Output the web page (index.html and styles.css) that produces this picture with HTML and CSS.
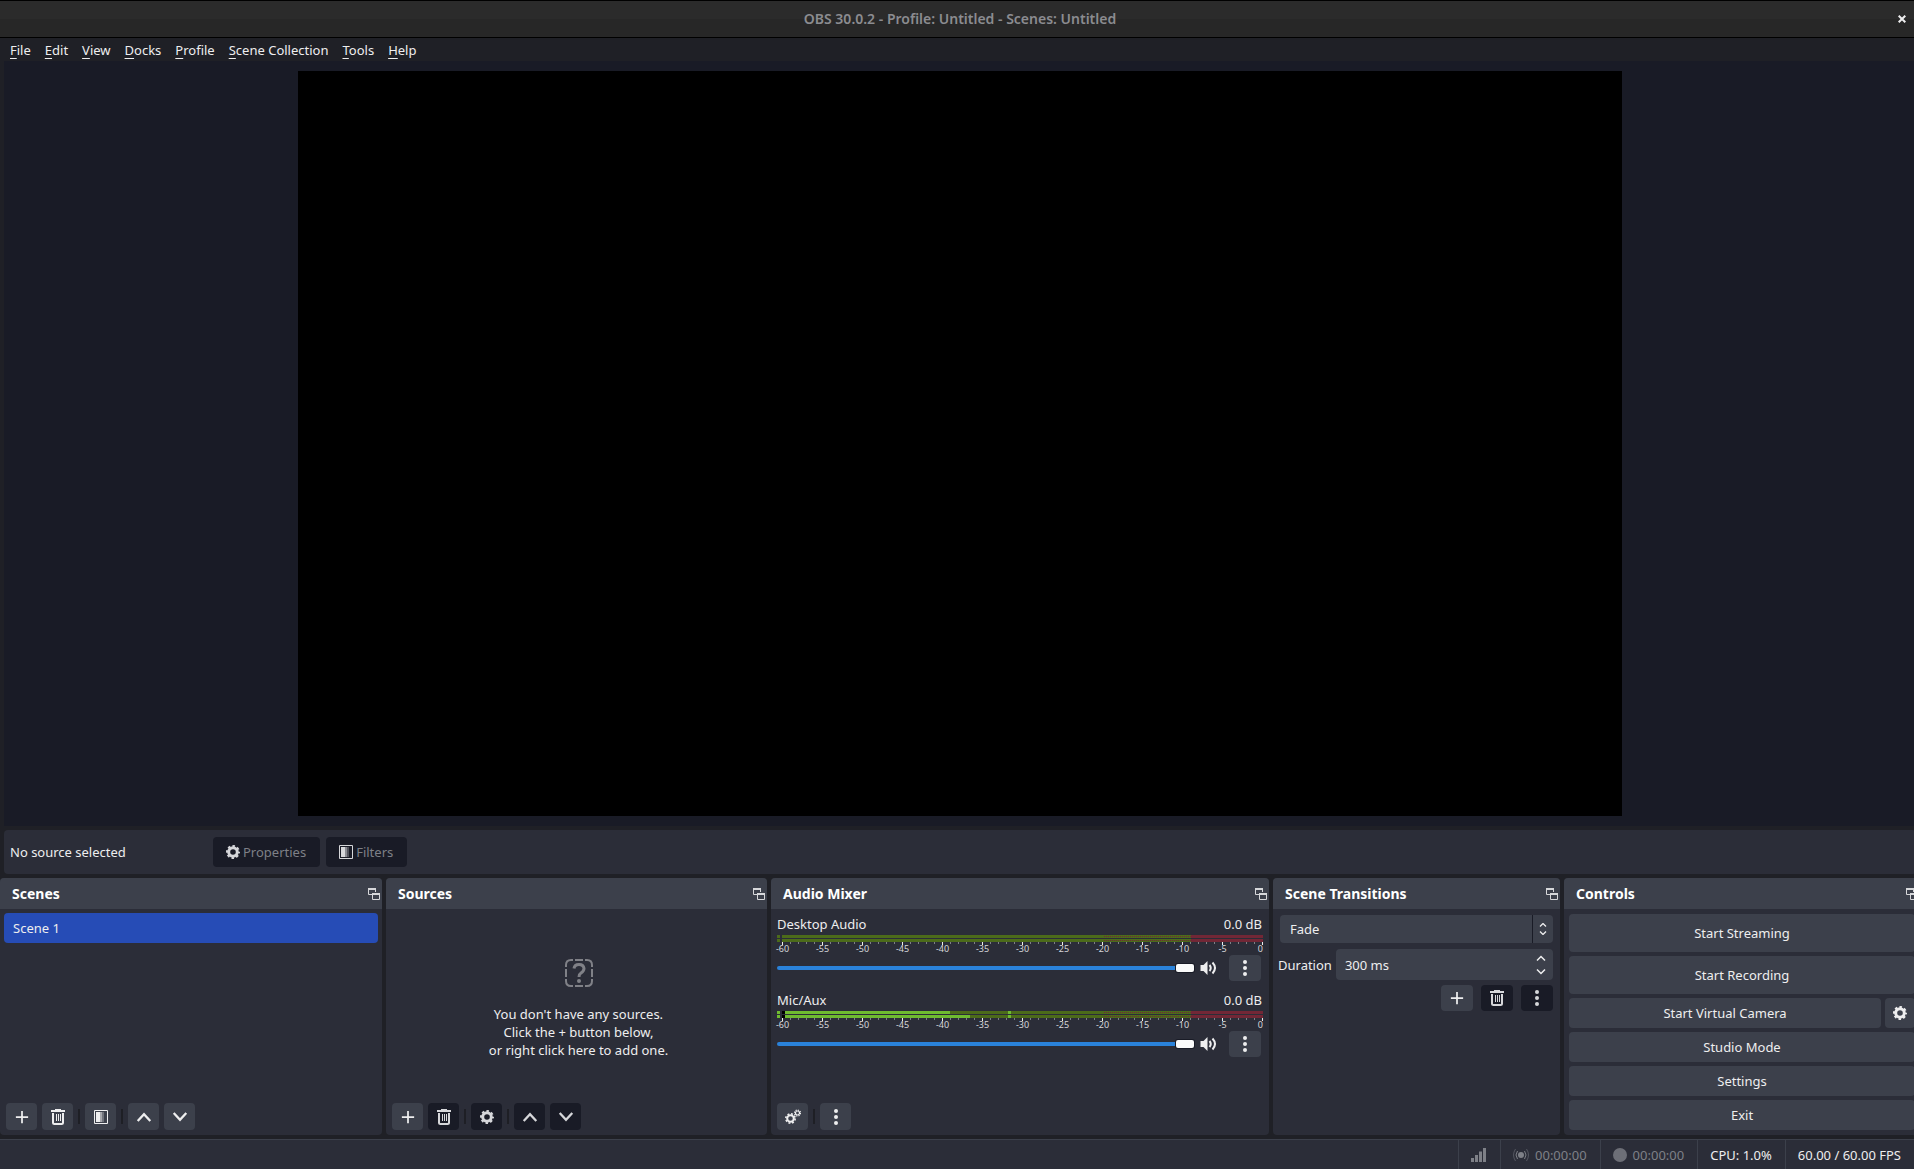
FILE: index.html
```
<!DOCTYPE html>
<html lang="en">
<head>
    <meta charset="UTF-8">
    <meta name="viewport" content="width=device-width, initial-scale=1.0">
    <title>OBS 30.0.2 - Profile: Untitled - Scenes: Untitled</title>
    <link rel="stylesheet" href="styles.css">
</head>
<body>
    <!-- shared icons -->
    <svg class="sprite" width="0" height="0" aria-hidden="true">
        <symbol id="plus" viewBox="0 0 16 16"><path d="M8 1v14M1 8h14" fill="none" stroke="currentColor" stroke-width="2"/></symbol>
        <symbol id="trash" viewBox="0 0 16 16"><path d="M5 0h6v1h4v2H1V1h4z" fill="currentColor"/><path d="M3 4v9.500q0 1.500 1.500 1.500h7q1.500 0 1.500-1.500V4" fill="none" stroke="currentColor" stroke-width="2"/><path d="M6.500 5v7M8.500 5v7M10.500 5v7" stroke="currentColor"/></symbol>
        <symbol id="filter" viewBox="0 0 14 14"><path d="M.5.500h13v13H.5z" fill="none" stroke="currentColor"/><path d="M2 2h4v10H2z" fill="currentColor"/><path d="M6 2h2v10H6z" fill="currentColor" opacity=".6"/><path d="M8 2h2v10H8z" fill="currentColor" opacity=".3"/></symbol>
        <symbol id="up" viewBox="0 0 14 14"><path d="M1.500 10.500 7 4.500l5.500 6" fill="none" stroke="currentColor" stroke-width="2"/></symbol>
        <symbol id="down" viewBox="0 0 14 14"><path d="M1.500 3.500 7 9.500l5.500-6" fill="none" stroke="currentColor" stroke-width="2"/></symbol>
        <symbol id="gear" viewBox="0 0 14 14"><circle cx="7" cy="7" r="4.300" fill="none" stroke="currentColor" stroke-width="3"/><circle cx="7" cy="7" r="6" fill="none" stroke="currentColor" stroke-width="2" stroke-dasharray="2.500 2.212" stroke-dashoffset="1.250"/></symbol>
        <symbol id="dots" viewBox="0 0 4 16"><circle cx="2" cy="2" r="2" fill="currentColor"/><circle cx="2" cy="8" r="2" fill="currentColor"/><circle cx="2" cy="14" r="2" fill="currentColor"/></symbol>
        <symbol id="float" viewBox="0 0 12 12"><path d="M4 6.500H.5V.5h7V4" fill="none" stroke="currentColor"/><path d="M0 0h8v2H0zM4 5h8v2H4z" fill="currentColor"/><path d="M4.500 5.500h7v6h-7z" fill="none" stroke="currentColor"/></symbol>
        <symbol id="speaker" viewBox="0 0 16 14"><path d="M0 4h3l4-4v14l-4-4H0z" fill="currentColor"/><path d="M9 4q2.500 3 0 6M12 1.500q5 5.500 0 11" fill="none" stroke="currentColor" stroke-width="2"/></symbol>
    </svg>

    <div class="window">
        <header class="titlebar">
            <h1>OBS 30.0.2 - Profile: Untitled - Scenes: Untitled</h1>
            <button class="close" aria-label="Close"><svg width="8" height="8" viewBox="0 0 8 8"><path d="M.7.700l6.600 6.600M7.300.700.700 7.300" stroke="currentColor" stroke-width="2"/></svg></button>
        </header>

        <nav class="menubar">
            <a href="#"><u>F</u>ile</a>
            <a href="#"><u>E</u>dit</a>
            <a href="#"><u>V</u>iew</a>
            <a href="#"><u>D</u>ocks</a>
            <a href="#"><u>P</u>rofile</a>
            <a href="#"><u>S</u>cene Collection</a>
            <a href="#"><u>T</u>ools</a>
            <a href="#"><u>H</u>elp</a>
        </nav>

        <main class="preview">
            <div class="canvas"></div>
        </main>

        <div class="context-bar">
            <span class="context-label">No source selected</span>
            <button disabled><svg width="14" height="14"><use href="#gear"/></svg>Properties</button>
            <button disabled><svg width="14" height="14"><use href="#filter"/></svg>Filters</button>
        </div>

        <div class="docks">
            <section class="dock">
                <div class="dock-title"><h2>Scenes</h2><button class="float" aria-label="Float Scenes"><svg width="12" height="12"><use href="#float"/></svg></button></div>
                <ul class="scene-list">
                    <li class="selected">Scene 1</li>
                </ul>
                <div class="tools">
                    <button aria-label="Add scene"><svg width="14" height="14"><use href="#plus"/></svg></button>
                    <button aria-label="Remove scene"><svg width="16" height="16"><use href="#trash"/></svg></button>
                    <span class="separator"></span>
                    <button aria-label="Scene filters"><svg width="14" height="14"><use href="#filter"/></svg></button>
                    <span class="separator"></span>
                    <button aria-label="Move scene up"><svg width="16" height="16"><use href="#up"/></svg></button>
                    <button aria-label="Move scene down"><svg width="16" height="16"><use href="#down"/></svg></button>
                </div>
            </section>

            <section class="dock">
                <div class="dock-title"><h2>Sources</h2><button class="float" aria-label="Float Sources"><svg width="12" height="12"><use href="#float"/></svg></button></div>
                <div class="empty">
                    <svg width="28" height="28" viewBox="0 0 28 28" fill="none" stroke="currentColor" stroke-width="2">
                        <path d="M1 8V6q0-5 5-5h2M10 1h8M20 1h2q5 0 5 5v2M27 10v8M27 20v2q0 5-5 5h-2M18 27h-8M8 27H6q-5 0-5-5v-2M1 18v-8"/>
                        <path d="M9 9.500q.5-4 5-4t5 4q0 2.500-3 4.500-2 1.200-2 4" stroke-width="3"/>
                        <circle cx="14" cy="22" r="2" fill="currentColor" stroke="none"/>
                    </svg>
                    <p>You don't have any sources.<br>Click the + button below,<br>or right click here to add one.</p>
                </div>
                <div class="tools">
                    <button aria-label="Add source"><svg width="14" height="14"><use href="#plus"/></svg></button>
                    <button disabled aria-label="Remove source"><svg width="16" height="16"><use href="#trash"/></svg></button>
                    <span class="separator"></span>
                    <button disabled aria-label="Source properties"><svg width="14" height="14"><use href="#gear"/></svg></button>
                    <span class="separator"></span>
                    <button disabled aria-label="Move source up"><svg width="16" height="16"><use href="#up"/></svg></button>
                    <button disabled aria-label="Move source down"><svg width="16" height="16"><use href="#down"/></svg></button>
                </div>
            </section>

            <section class="dock">
                <div class="dock-title"><h2>Audio Mixer</h2><button class="float" aria-label="Float Audio Mixer"><svg width="12" height="12"><use href="#float"/></svg></button></div>
                <div class="mixer">
                    <div class="channel">
                        <div class="channel-name"><label for="desktop">Desktop Audio</label><output>0.0 dB</output></div>
                        <div class="meter"><div class="bar"></div></div>
                        <div class="meter"><div class="bar"></div></div>
                        <div class="scale">
                            <span>-60</span><span>-55</span><span>-50</span><span>-45</span><span>-40</span><span>-35</span><span>-30</span><span>-25</span><span>-20</span><span>-15</span><span>-10</span><span>-5</span><span>0</span>
                        </div>
                        <div class="volume">
                            <input type="range" id="desktop" min="0" max="100" value="100">
                            <button class="mute" aria-label="Mute Desktop Audio"><svg width="17" height="14"><use href="#speaker"/></svg></button>
                            <button class="small" aria-label="Desktop Audio options"><svg width="4" height="16"><use href="#dots"/></svg></button>
                        </div>
                    </div>
                    <div class="channel live">
                        <div class="channel-name"><label for="mic">Mic/Aux</label><output>0.0 dB</output></div>
                        <div class="meter"><div class="bar"><i class="level" style="width: 35%"></i><i class="hold" style="left: 47%"></i></div></div>
                        <div class="meter"><div class="bar"><i class="level" style="width: 39%"></i><i class="hold" style="left: 47%"></i></div></div>
                        <div class="scale">
                            <span>-60</span><span>-55</span><span>-50</span><span>-45</span><span>-40</span><span>-35</span><span>-30</span><span>-25</span><span>-20</span><span>-15</span><span>-10</span><span>-5</span><span>0</span>
                        </div>
                        <div class="volume">
                            <input type="range" id="mic" min="0" max="100" value="100">
                            <button class="mute" aria-label="Mute Mic/Aux"><svg width="17" height="14"><use href="#speaker"/></svg></button>
                            <button class="small" aria-label="Mic/Aux options"><svg width="4" height="16"><use href="#dots"/></svg></button>
                        </div>
                    </div>
                </div>
                <div class="tools">
                    <button aria-label="Advanced audio properties">
                        <svg width="16" height="16" viewBox="0 0 16 16" fill="none" stroke="currentColor">
                            <circle cx="5.500" cy="9.500" r="3.300" stroke-width="2"/>
                            <circle cx="5.500" cy="9.500" r="4.700" stroke-width="1.600" stroke-dasharray="1.900 1.790"/>
                            <circle cx="12.500" cy="4" r="2" stroke-width="1.200"/>
                            <circle cx="12.500" cy="4" r="3" stroke-width="1.200" stroke-dasharray="1.200 1.156"/>
                        </svg>
                    </button>
                    <span class="separator"></span>
                    <button aria-label="Audio mixer menu"><svg width="4" height="16"><use href="#dots"/></svg></button>
                </div>
            </section>

            <section class="dock">
                <div class="dock-title"><h2>Scene Transitions</h2><button class="float" aria-label="Float Scene Transitions"><svg width="12" height="12"><use href="#float"/></svg></button></div>
                <div class="transitions">
                    <div class="combo">
                        <select aria-label="Transition">
                            <option>Fade</option>
                        </select>
                        <svg width="8" height="12" viewBox="0 0 8 12"><path d="M1 3.500l3-3 3 3M1 8.500l3 3 3-3" fill="none" stroke="currentColor" stroke-width="1.300"/></svg>
                    </div>
                    <div class="duration">
                        <label for="duration">Duration</label>
                        <div class="spin">
                            <input type="text" id="duration" value="300 ms">
                            <svg width="10" height="20" viewBox="0 0 10 20"><path d="M1 5.500l4-4 4 4M1 14.500l4 4 4-4" fill="none" stroke="currentColor" stroke-width="1.500"/></svg>
                        </div>
                    </div>
                    <div class="transition-tools">
                        <button class="small" aria-label="Add transition"><svg width="14" height="14"><use href="#plus"/></svg></button>
                        <button class="small" disabled aria-label="Remove transition"><svg width="16" height="16"><use href="#trash"/></svg></button>
                        <button class="small" disabled aria-label="Transition properties"><svg width="4" height="16"><use href="#dots"/></svg></button>
                    </div>
                </div>
            </section>

            <section class="dock">
                <div class="dock-title"><h2>Controls</h2><button class="float" aria-label="Float Controls"><svg width="12" height="12"><use href="#float"/></svg></button></div>
                <div class="controls">
                    <button class="tall">Start Streaming</button>
                    <button class="tall">Start Recording</button>
                    <div class="camera">
                        <button>Start Virtual Camera</button>
                        <button class="camera-config" aria-label="Virtual camera settings"><svg width="14" height="14"><use href="#gear"/></svg></button>
                    </div>
                    <button>Studio Mode</button>
                    <button>Settings</button>
                    <button>Exit</button>
                </div>
            </section>
        </div>

        <footer class="statusbar">
            <div class="status dim">
                <svg width="16" height="14" viewBox="0 0 16 14"><path d="M0 10h3v4H0zM4 7h3v7H4zM8 3.500h3V14H8zM12 0h3v14h-3z" fill="currentColor"/></svg>
            </div>
            <div class="status dim">
                <svg width="16" height="14" viewBox="0 0 16 14" fill="none" stroke="currentColor"><circle cx="8" cy="7" r="3" fill="currentColor" stroke="none"/><path d="M4.500 3q-3 4 0 8M11.500 3q3 4 0 8"/><path d="M2.500 1q-4 6 0 12M13.500 1q4 6 0 12" opacity=".5"/></svg>
                <span>00:00:00</span>
            </div>
            <div class="status dim">
                <svg width="14" height="14" viewBox="0 0 14 14"><circle cx="7" cy="7" r="7" fill="currentColor" opacity=".8"/></svg>
                <span>00:00:00</span>
            </div>
            <div class="status">CPU: 1.0%</div>
            <div class="status">60.00 / 60.00 FPS</div>
        </footer>
    </div>
</body>
</html>
```
FILE: styles.css
```
* {
    box-sizing: border-box;
}
body {
    margin: 0;
    overflow: hidden;
    background-color: #1f2026;
    color: #eeeeef;
    font-family: 'Noto Sans', 'Open Sans', sans-serif;
    font-size: 13px;
    line-height: 18px;
}
.sprite {
    position: absolute;
}
/* the window runs a little past the right edge of the screen */
.window {
    display: flex;
    flex-direction: column;
    height: 100vh;
    margin-right: -6px;
}
svg {
    display: block;
    flex: none;
}
h1, h2, p, ul {
    margin: 0;
    padding: 0;
}
button, input, select {
    font: inherit;
    color: inherit;
    border: none;
    margin: 0;
    outline: none;
}
button {
    display: flex;
    align-items: center;
    justify-content: center;
    padding: 0;
    border-radius: 4px;
    background-color: #3c404b;
}
button:hover {
    background-color: #4e5262;
}
button:disabled {
    background-color: #191b26;
    color: #d6d7da;
}

/* title bar and menu */
.titlebar {
    display: grid;
    grid-template-columns: 1fr auto 1fr;
    align-items: center;
    height: 38px;
    border-top: 1px solid #000;
    border-bottom: 1px solid #000;
    background: linear-gradient(#2b2b2b 50%, #272727 50%);
}
.titlebar h1 {
    grid-column: 2;
    color: #8b8c90;
    font-size: 14px;
    font-weight: 600;
}
.close {
    justify-self: end;
    margin-right: 14px;
    background: none;
}
.menubar {
    display: flex;
    align-items: center;
    gap: 14px;
    height: 23px;
    padding: 0 10px;
}
.menubar a {
    color: inherit;
    text-decoration: none;
}
.menubar u {
    text-underline-offset: 3px;
}

/* preview */
.preview {
    display: flex;
    justify-content: center;
    flex: 1;
    min-height: 0;
    margin: 0 4px;
    padding: 10px;
    background-color: #191b26;
}
.canvas {
    height: 100%;
    aspect-ratio: 16 / 9;
    background-color: #000;
}
.context-bar {
    display: flex;
    align-items: center;
    gap: 6px;
    height: 44px;
    margin: 4px;
    padding: 0 6px;
    border-radius: 4px;
    background-color: #2b2d38;
}
.context-label {
    width: 197px;
}
.context-bar button {
    gap: 3px;
    height: 30px;
    padding: 0 14px 0 13px;
    color: #7e8087;
}
.context-bar svg {
    color: #d6d7da;
}

/* docks */
.docks {
    display: grid;
    grid-template-columns: 382fr 381fr 498fr 287fr 356fr;
    gap: 4px;
}
.dock {
    display: flex;
    flex-direction: column;
    min-width: 0;
    border-radius: 4px;
    background-color: #2b2d38;
    overflow: hidden;
}
.dock-title {
    display: flex;
    align-items: center;
    justify-content: space-between;
    height: 31px;
    padding: 0 2px 0 12px;
    background-color: #3c404b;
}
.dock-title h2 {
    font-size: 14px;
    font-weight: 700;
    color: #fff;
}
.float {
    background: none;
    color: #d6d7da;
}
.scene-list {
    flex: 1;
    padding: 4px;
    list-style: none;
}
.scene-list li {
    height: 30px;
    padding: 6px 9px;
    border-radius: 4px;
}
.scene-list .selected {
    background-color: #264cb6;
}
.tools {
    display: flex;
    align-items: center;
    gap: 5px;
    padding: 0 6px 5px;
}
.tools button {
    width: 31px;
    height: 27px;
}
.separator {
    width: 2px;
    height: 15px;
    background-color: #1e1f25;
}
.empty {
    display: flex;
    flex-direction: column;
    align-items: center;
    justify-content: center;
    gap: 18px;
    flex: 1;
    padding: 6px 0 0 4px;
    text-align: center;
}
.empty svg {
    color: #808187;
}

/* audio mixer */
.mixer {
    display: flex;
    flex-direction: column;
    gap: 10px;
    flex: 1;
    padding: 6px;
}
.channel-name {
    display: flex;
    justify-content: space-between;
    margin-bottom: 2px;
    padding-right: 1px;
}
.meter {
    display: flex;
    gap: 2px;
    height: 3px;
}
.meter + .meter {
    margin-top: 1px;
}
.meter::before {
    content: "";
    width: 3px;
    background-color: #4c6b1a;
}
.live .meter::before {
    background-color: #6fbb30;
}
.bar {
    position: relative;
    flex: 1;
    background: linear-gradient(to right, #4c6b1a 85%, #722736 85%);
}
/* dotted warning range between -20 and -9 dB */
.bar::after {
    content: "";
    position: absolute;
    top: 1px;
    left: 67%;
    width: 18%;
    height: 1px;
    background: repeating-linear-gradient(to right, #722736 0 1px, transparent 1px 2px);
}
.level {
    display: block;
    height: 3px;
    border-left: 3px solid #000;
    background-color: #6fbb30;
}
.hold {
    position: absolute;
    top: 0;
    width: 3px;
    height: 3px;
    background-color: #6fbb30;
}
/* one tick for each dB, a longer one every 5 dB */
.scale {
    display: flex;
    justify-content: space-between;
    height: 13px;
    margin-left: 5px;
    padding-top: 1px;
    font-size: 9px;
    line-height: 11px;
    color: #d6d7da;
    background:
        repeating-linear-gradient(to right, #eeeeef 0 1px, transparent 1px calc((100% - 1px) / 12)) top / 100% 3px no-repeat,
        repeating-linear-gradient(to right, #7e8087 0 1px, transparent 1px calc((100% - 1px) / 60)) top / 100% 2px no-repeat;
}
.scale span {
    display: flex;
    justify-content: center;
    width: 1px;
}
.scale span:last-child {
    justify-content: flex-end;
}
.volume {
    display: flex;
    align-items: center;
    padding-right: 2px;
}
.volume input {
    flex: 1;
    min-width: 0;
    height: 8px;
    margin-right: 6px;
    background: none;
    appearance: none;
}
.volume input::-webkit-slider-runnable-track {
    height: 4px;
    border-radius: 2px;
    background-color: #2a82da;
}
.volume input::-webkit-slider-thumb {
    appearance: none;
    width: 18px;
    height: 8px;
    margin-top: -2px;
    border-radius: 2px;
    background-color: #fafafa;
    box-shadow: 0 0 0 1px #191b26;
}
.mute {
    margin-right: 12px;
    background: none;
}
.small {
    width: 32px;
    height: 26px;
}

/* scene transitions */
.transitions {
    display: flex;
    flex-direction: column;
    padding: 6px 7px 0 5px;
}
.combo {
    position: relative;
    margin-left: 2px;
}
.combo select {
    display: block;
    width: 100%;
    height: 28px;
    padding: 0 10px;
    border-radius: 4px;
    background: linear-gradient(#191b26, #191b26) right 20px top / 1px 100% no-repeat #3c404b;
    appearance: none;
}
.combo svg {
    position: absolute;
    top: 8px;
    right: 6px;
    pointer-events: none;
}
.duration {
    display: flex;
    align-items: center;
    gap: 4px;
    margin-top: 6px;
}
.spin {
    position: relative;
    flex: 1;
}
.spin input {
    display: block;
    width: 100%;
    height: 31px;
    padding: 0 9px;
    border-radius: 4px;
    background-color: #3c404b;
}
.spin svg {
    position: absolute;
    top: 6px;
    right: 7px;
}
.transition-tools {
    display: flex;
    justify-content: flex-end;
    gap: 8px;
    margin-top: 5px;
}

/* controls */
.controls {
    display: flex;
    flex-direction: column;
    gap: 4px;
    padding: 5px;
}
.controls button {
    height: 30px;
}
.controls .tall {
    height: 38px;
}
.camera {
    display: flex;
    gap: 4px;
}
.camera button {
    flex: 1;
}
.camera .camera-config {
    flex: 0 0 30px;
}

/* status bar */
.statusbar {
    display: flex;
    justify-content: flex-end;
    height: 30px;
    margin-top: 4px;
    padding-right: 6px;
    border-top: 1px solid #3c404b;
    background-color: #2b2d38;
}
.status {
    display: flex;
    align-items: center;
    gap: 6px;
    padding: 0 13px 0 12px;
    border-left: 1px solid #3c404b;
}
.dim {
    color: #7e8087;
}
```
